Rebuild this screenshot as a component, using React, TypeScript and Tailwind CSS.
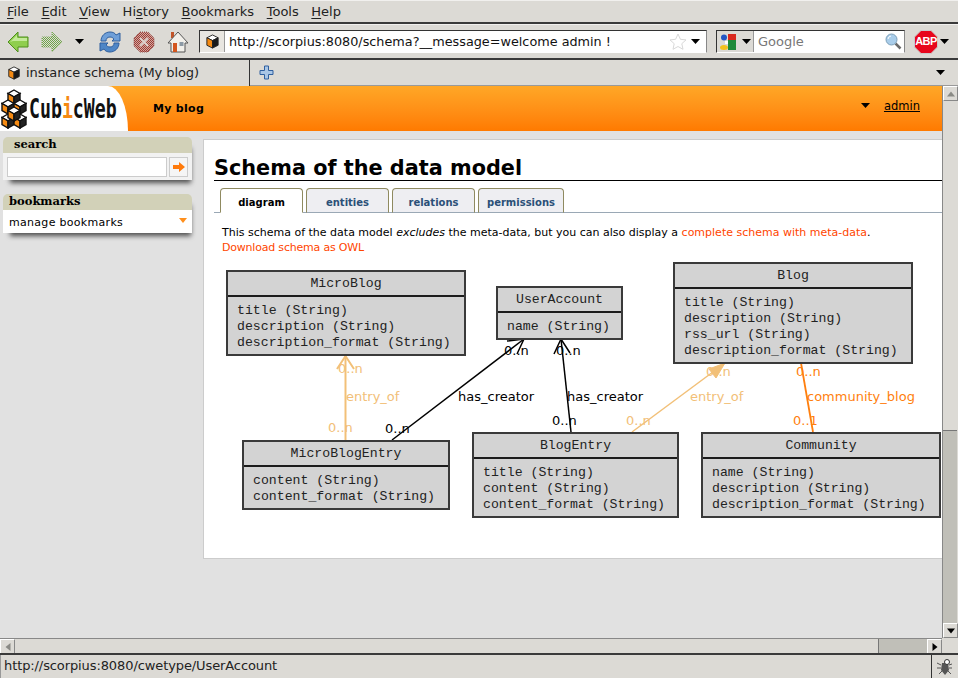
import React from 'react';

const CHROME_MENU = [
  { key: 'F', rest: 'ile' },
  { key: 'E', rest: 'dit' },
  { key: 'V', rest: 'iew' },
  { pre: 'Hi', key: 's', rest: 'tory' },
  { key: 'B', rest: 'ookmarks' },
  { key: 'T', rest: 'ools' },
  { key: 'H', rest: 'elp' },
];

function Caret({ className = '' }: { className?: string }) {
  return (
    <svg width="9" height="5" viewBox="0 0 9 5" className={`shrink-0 ${className}`}>
      <path d="M0 0h9L4.5 5z" fill="#000" />
    </svg>
  );
}

function Cube({ size = 16 }: { size?: number }) {
  return (
    <svg width={size} height={size} viewBox="0 0 16 16" className="shrink-0">
      <path d="M8 1l6 3-6 3-6-3z" fill="#fff" stroke="#222" strokeWidth="1" />
      <path d="M2 4l6 3v8l-6-3z" fill="#f58a12" stroke="#222" strokeWidth="1" />
      <path d="M14 4l-6 3v8l6-3z" fill="#1a1a1a" stroke="#222" strokeWidth="1" />
    </svg>
  );
}

function BackArrow() {
  return (
    <svg width="22" height="22" viewBox="0 0 22 22">
      <path d="M1 11L11 1v5h10v10H11v5z" fill="#8fce4e" stroke="#4f8f1d" strokeWidth="1" />
      <path d="M3 11l7-7v3h10v3H6z" fill="#c4ea9a" />
    </svg>
  );
}

// disabled toolbar buttons are dithered in the reference
function ForwardArrow() {
  return (
    <svg width="22" height="22" viewBox="0 0 22 22">
      <defs>
        <pattern id="dither-green" width="2" height="2" patternUnits="userSpaceOnUse">
          <rect width="2" height="2" fill="#dcdad5" />
          <rect width="1" height="1" fill="#6fa548" />
          <rect x="1" y="1" width="1" height="1" fill="#6fa548" />
        </pattern>
      </defs>
      <path d="M21 11L11 1v5H1v10h10v5z" fill="#8dbb6a" stroke="#6d9a4a" strokeWidth="1" strokeDasharray="1 1" />
      <path d="M21 11L11 1v5H1v10h10v5z" fill="url(#dither-green)" />
    </svg>
  );
}

function Reload() {
  return (
    <svg width="22" height="22" viewBox="0 0 22 22">
      <path d="M2 10c0-5 4-9 9-9 3 0 5 1 6 3l4-2v8h-8l2-2c-1-1-2-2-4-2-3 0-4 2-4 4z" fill="#6f9fd8" stroke="#2f5f9f" />
      <path d="M20 12c0 5-4 9-9 9-3 0-5-1-6-3l-4 2v-8h8l-2 2c1 1 2 2 4 2 3 0 4-2 4-4z" fill="#4f86c6" stroke="#2f5f9f" />
    </svg>
  );
}

function Stop() {
  return (
    <svg width="22" height="22" viewBox="0 0 22 22">
      <defs>
        <pattern id="dither-red" width="2" height="2" patternUnits="userSpaceOnUse">
          <rect width="2" height="2" fill="#cfa9a3" />
          <rect width="1" height="1" fill="#a03c34" />
          <rect x="1" y="1" width="1" height="1" fill="#a03c34" />
        </pattern>
      </defs>
      <path d="M7 1h8l6 6v8l-6 6H7l-6-6V7z" fill="url(#dither-red)" stroke="#90504c" strokeDasharray="1 1" />
      <path d="M7 7l8 8M15 7l-8 8" stroke="#dcd0cc" strokeWidth="2" />
    </svg>
  );
}

function Home() {
  return (
    <svg width="22" height="22" viewBox="0 0 22 22">
      <rect x="4" y="1" width="3" height="6" fill="#c2552a" />
      <path d="M11 1L1 12h3v9h14v-9h3z" fill="#f2f0ea" stroke="#555" />
      <rect x="6" y="12" width="4" height="9" fill="#d4561e" />
      <rect x="12.500" y="11" width="4" height="4" fill="#8c9aa5" />
    </svg>
  );
}

function GoogleMark() {
  return (
    <svg width="16" height="16" viewBox="0 0 16 16" className="shrink-0">
      <rect x="8" y="0" width="8" height="6" fill="#d9281e" />
      <rect x="8" y="6" width="8" height="10" fill="#1f8a3a" />
      <circle cx="4" cy="3.500" r="3" fill="#2356c5" />
      <path d="M5 7h3v3H5z" fill="#fff" />
      <ellipse cx="4" cy="13.500" rx="4" ry="2.500" fill="#f3c21c" />
    </svg>
  );
}

function Magnifier() {
  return (
    <svg width="17" height="17" viewBox="0 0 17 17" className="shrink-0">
      <path d="M10.500 10.500l5 5" stroke="#6b6b6b" strokeWidth="2.500" />
      <circle cx="6.500" cy="6.500" r="5.500" fill="#a9cdea" stroke="#7d9fb8" />
      <path d="M3 6a3.500 3.500 0 013-3" stroke="#fff" fill="none" />
    </svg>
  );
}

function Abp() {
  return (
    <div className="relative w-[24px] h-[24px] shrink-0">
      <svg width="24" height="24" viewBox="0 0 24 24" className="absolute inset-0">
        <path d="M7 .5h10L23.500 7v10L17 23.500H7L.5 17V7z" fill="#e8061c" stroke="#c9c9c9" />
      </svg>
      <span className="absolute inset-0 flex items-center justify-center text-white font-bold text-[11px] tracking-[-0.5px] font-['Liberation_Sans',sans-serif]">
        ABP
      </span>
    </div>
  );
}

function LogoCubes() {
  const cube = (x: number, y: number) => (
    <g key={`${x}-${y}`} transform={`translate(${x} ${y})`}>
      <path d="M6 0l6 3.500-6 3.500L0 3.500z" fill="#fff" stroke="#111" strokeWidth="1.400" />
      <path d="M0 3.500l6 3.500v7l-6-3.500z" fill="#f58a12" stroke="#111" strokeWidth="1.400" />
      <path d="M12 3.500L6 7v7l6-3.500z" fill="#222" stroke="#111" strokeWidth="1.400" />
    </g>
  );
  return (
    <svg width="26" height="40" viewBox="0 0 26 40" className="shrink-0">
      {cube(7, 1)}
      {cube(1, 11)}
      {cube(13, 11)}
      {cube(1, 25)}
      {cube(13, 25)}
      {cube(7, 18)}
    </svg>
  );
}

function Underlined({ pre, k, rest }: { pre?: string; k: string; rest: string }) {
  return (
    <span>
      {pre}
      <span className="underline underline-offset-2">{k}</span>
      {rest}
    </span>
  );
}

function Toolbar() {
  return (
    <div className="h-[36px] flex items-center pl-[7px] border-t border-white/60 border-b-2 border-b-[#3a3a3a] shrink-0">
      <BackArrow />
      <div className="ml-[12px]"><ForwardArrow /></div>
      <Caret className="ml-[12px]" />
      <div className="ml-[15px]"><Reload /></div>
      <div className="ml-[12px]"><Stop /></div>
      <div className="ml-[12px]"><Home /></div>

      <div className="ml-[10px] w-[508px] h-[23px] flex items-center bg-white border border-[#888] border-t-[#333] border-l-[#333] border-b-white">
        <div className="w-[25px] h-full bg-[#e8e6e1] border-r border-[#999] flex items-center justify-center">
          <Cube size={15} />
        </div>
        <span className="ml-[4px] flex-1 text-[12.8px] text-[#111] whitespace-nowrap">
          http://scorpius:8080/schema?__message=welcome admin !
        </span>
        <svg width="18" height="17" viewBox="0 0 18 17" className="shrink-0">
          <path d="M9 1l2.400 5.300 5.600.6-4.200 3.800 1.200 5.600L9 13.500l-5 2.800 1.200-5.600L1 6.900l5.600-.6z" fill="#fff" stroke="#d8d8d8" />
        </svg>
        <Caret className="ml-[4px] mr-[6px]" />
      </div>

      <div className="ml-[9px] w-[189px] h-[23px] flex items-center bg-white border border-[#888] border-t-[#333] border-l-[#333] border-b-white">
        <div className="w-[37px] h-full bg-[#dcdad5] border-r border-[#999] flex items-center pl-[3px] gap-[6px]">
          <GoogleMark />
          <Caret />
        </div>
        <span className="ml-[4px] flex-1 text-[13px] text-[#777]">Google</span>
        <div className="mr-[2px]"><Magnifier /></div>
      </div>

      <div className="ml-[9px]"><Abp /></div>
      <Caret className="ml-[2px]" />
    </div>
  );
}

function TabStrip() {
  return (
    <div className="h-[26px] flex items-stretch shrink-0 relative">
      <div className="w-[250px] flex items-center pl-[7px] gap-[5px] border-r border-[#333] text-[13px] tracking-[-0.1px] text-[#222]">
        <Cube size={14} />
        <span>instance schema (My blog)</span>
      </div>
      <div className="flex-1 flex items-center pl-[9px] pr-[13px] justify-between border-b border-[#999]">
        <svg width="15" height="15" viewBox="0 0 15 15">
          <path d="M5.500 1h4v4.500H14v4H9.500V14h-4V9.500H1v-4h4.500z" fill="#a9c6e6" stroke="#2f5f9f" />
        </svg>
        <Caret />
      </div>
    </div>
  );
}

function SideBox({ title, center, children }: { title: string; center?: boolean; children: React.ReactNode }) {
  return (
    <div className="w-[189px] rounded-t-[5px] shadow-[3px_7px_5px_-4px_rgba(0,0,0,0.65)]">
      <div className={`h-[16px] rounded-t-[5px] bg-[#d2d1b8] font-['DejaVu_Serif',serif] font-bold text-[11.5px] leading-[15px] text-black ${center ? 'pl-[11px]' : 'pl-[6px]'}`}>
        {title}
      </div>
      {children}
    </div>
  );
}

function Sidebar() {
  return (
    <aside className="w-[203px] shrink-0 pl-[3px] pt-[6px] flex flex-col gap-[14px]">
      <SideBox title="search" center>
        <div className="h-[27px] bg-[#f2f2f2] flex items-center pl-[4px] gap-[2px]">
          <div className="w-[160px] h-[20px] bg-white border border-[#ccc]" />
          <div className="w-[19px] h-[20px] bg-[#f5f5f5] border border-[#ccc] flex items-center justify-center">
            <svg width="12" height="10" viewBox="0 0 12 10">
              <path d="M0 3h6V0l6 5-6 5V7H0z" fill="#ff7a0a" />
            </svg>
          </div>
        </div>
      </SideBox>
      <SideBox title="bookmarks">
        <div className="h-[23px] pt-[3px] bg-white flex items-center justify-between pl-[6px] pr-[5px] text-[11px] tracking-[0.3px] text-black">
          <span>manage bookmarks</span>
          <svg width="8" height="5" viewBox="0 0 8 5" className="-mt-[5px]">
            <path d="M0 0h8L4 5z" fill="#ff8f1c" />
          </svg>
        </div>
      </SideBox>
    </aside>
  );
}

const TABS = [
  { label: 'diagram', width: 'w-[83px]' },
  { label: 'entities', width: 'w-[83px]' },
  { label: 'relations', width: 'w-[83px]' },
  { label: 'permissions', width: 'w-[86px]' },
];

function SchemaTabs() {
  return (
    <div className="mt-[7px] ml-[10px] h-[25px] flex items-end border-b border-[#9aa8b5]">
      <div className="flex gap-[3px] pl-[6px] -mb-px">
        {TABS.map((t, i) => (
          <div
            key={t.label}
            className={`${t.width} h-[25px] pt-[3px] rounded-t-[4px] border border-[#8f8a60] flex items-center justify-center text-[10px] font-bold ${
              i === 0
                ? 'bg-white text-black border-b-white'
                : 'bg-[#eeeef2] text-[#2b5078] border-b-[#9aa8b5]'
            }`}
          >
            {t.label}
          </div>
        ))}
      </div>
    </div>
  );
}

function EntityBox({ className, name, attrs }: { className: string; name: string; attrs: string[] }) {
  return (
    <div className={`absolute bg-[#d3d3d3] border-2 border-[#3a3a3a] font-['Liberation_Mono',monospace] text-[13.2px] leading-[16px] text-[#222] ${className}`}>
      <div className="h-[25px] flex items-center justify-center border-b-2 border-[#1c1c1c]">{name}</div>
      <div className="pt-[6px] pl-[9px] whitespace-pre">
        {attrs.map((a) => (
          <div key={a}>{a}</div>
        ))}
      </div>
    </div>
  );
}

function Label({ className, children }: { className: string; children: React.ReactNode }) {
  return <span className={`absolute text-[13px] leading-[15px] whitespace-nowrap ${className}`}>{children}</span>;
}

const PALE = '#f2c078';
const STRONG = '#ff7f0e';

// canvas origin is page (204, 262)
function Diagram() {
  return (
    <div className="relative h-[257px] mt-[7px]">
      <svg width="738" height="257" viewBox="0 0 738 257" className="absolute inset-0">
        <path d="M141.500 178V94" stroke={PALE} strokeWidth="2" />
        <path d="M133 107l8.500-13 8.500 13" stroke={PALE} strokeWidth="2" fill="none" />
        <path d="M188 178L320 77" stroke="#000" strokeWidth="1.500" />
        <path d="M303 79l17-2-7 15" stroke="#000" strokeWidth="1.500" fill="none" />
        <path d="M367 170L357 77" stroke="#000" strokeWidth="1.500" />
        <path d="M350 92l7-15 9 14" stroke="#000" strokeWidth="1.500" fill="none" />
        <path d="M428 170L521 101" stroke={PALE} strokeWidth="1.500" />
        <path d="M505 107l16-6-9 15z" fill={PALE} stroke={PALE} />
        <path d="M609 170L597 101" stroke={STRONG} strokeWidth="1.800" />
      </svg>

      <EntityBox className="left-[22px] top-[8px] w-[240px] h-[86px]" name="MicroBlog" attrs={['title (String)', 'description (String)', 'description_format (String)']} />
      <EntityBox className="left-[292px] top-[24px] w-[127px] h-[54px]" name="UserAccount" attrs={['name (String)']} />
      <EntityBox className="left-[469px] top-0 w-[240px] h-[102px]" name="Blog" attrs={['title (String)', 'description (String)', 'rss_url (String)', 'description_format (String)']} />
      <EntityBox className="left-[38px] top-[178px] w-[208px] h-[70px]" name="MicroBlogEntry" attrs={['content (String)', 'content_format (String)']} />
      <EntityBox className="left-[268px] top-[170px] w-[207px] h-[86px]" name="BlogEntry" attrs={['title (String)', 'content (String)', 'content_format (String)']} />
      <EntityBox className="left-[497px] top-[170px] w-[240px] h-[86px]" name="Community" attrs={['name (String)', 'description (String)', 'description_format (String)']} />

      <Label className="left-[134px] top-[99px] text-[#f2c078]">0..n</Label>
      <Label className="left-[142px] top-[127px] text-[#f2c078]">entry_of</Label>
      <Label className="left-[124px] top-[158px] text-[#f2c078]">0..n</Label>
      <Label className="left-[181px] top-[159px] text-black">0..n</Label>
      <Label className="left-[254px] top-[127px] text-black">has_creator</Label>
      <Label className="left-[300px] top-[81px] text-black">0..n</Label>
      <Label className="left-[352px] top-[81px] text-black">0..n</Label>
      <Label className="left-[363px] top-[127px] text-black">has_creator</Label>
      <Label className="left-[348px] top-[151px] text-black">0..n</Label>
      <Label className="left-[502px] top-[102px] text-[#f2c078]">0..n</Label>
      <Label className="left-[486px] top-[127px] text-[#f2c078]">entry_of</Label>
      <Label className="left-[422px] top-[151px] text-[#f2c078]">0..n</Label>
      <Label className="left-[592px] top-[102px] text-[#ff7f0e]">0..n</Label>
      <Label className="left-[603px] top-[127px] text-[12.8px] text-[#ff7f0e]">community_blog</Label>
      <Label className="left-[589px] top-[151px] text-[#ff7f0e]">0..1</Label>
    </div>
  );
}

function MainPanel() {
  return (
    <main className="w-[739px] h-[420px] mt-[8px] bg-white border-l border-t border-b border-[#ccc] overflow-hidden shrink-0">
      <h1 className="ml-[10px] mt-[15px] h-[25px] text-[20.8px] leading-[26px] font-bold text-black whitespace-nowrap border-b border-black box-content">
        Schema of the data model
      </h1>
      <SchemaTabs />
      <div className="ml-[18px] mt-[12px] text-[11px] leading-[15px] text-black">
        <p>
          This schema of the data model <em>excludes</em> the meta-data, but you can also display a{' '}
          <span className="text-[#ff4500]">complete schema with meta-data</span>.
        </p>
        <p className="text-[#ff4500] tracking-[-0.2px]">Download schema as OWL</p>
      </div>
      <Diagram />
    </main>
  );
}

function ScrollButton({ dir, className = '' }: { dir: 'up' | 'down' | 'left' | 'right'; className?: string }) {
  const paths = { up: 'M0 5h8L4 0z', down: 'M0 0h8L4 5z', left: 'M5 0v8L0 4z', right: 'M0 0v8l5-4z' };
  const fill = dir === 'up' || dir === 'left' ? '#8a8a85' : '#000';
  return (
    <div className={`w-[15px] h-[15px] shrink-0 bg-[#dcdad5] border border-[#888] border-t-white border-l-white flex items-center justify-center ${className}`}>
      <svg width="8" height="8" viewBox="0 0 8 8">
        <path d={paths[dir]} fill={fill} transform={dir === 'up' || dir === 'down' ? 'translate(0 1.500)' : 'translate(1.500 0)'} />
      </svg>
    </div>
  );
}

export default function App() {
  return (
    <div className="w-[958px] h-[678px] overflow-hidden flex flex-col bg-[#dcdad5] font-['DejaVu_Sans',sans-serif]">
      {/* menu bar */}
      <div className="h-[24px] shrink-0 flex items-center pl-[7px] gap-[12.6px] text-[13px] text-[#222] border-t border-white/60 border-b-2 border-b-[#3a3a3a]">
        {CHROME_MENU.map((m) => (
          <Underlined key={m.key + m.rest} pre={m.pre} k={m.key} rest={m.rest} />
        ))}
      </div>
      <Toolbar />
      <TabStrip />

      {/* page header */}
      <div className="flex-1 min-h-0 flex">
        <div className="w-[942px] flex flex-col min-h-0">
          <header className="h-[45px] shrink-0 flex items-stretch bg-gradient-to-b from-[#ffa726] to-[#ff7a00]">
            <div className="w-[128px] bg-white rounded-tr-[20px_45px] flex items-center pl-[1px] gap-[2px] overflow-hidden">
              <LogoCubes />
              <span className="font-['DejaVu_Sans_Mono',monospace] font-bold text-[26px] leading-none scale-x-[0.7] origin-left text-[#111] whitespace-nowrap">
                Cub<span className="text-[#f58a12]">i</span>cWeb
              </span>
            </div>
            <div className="ml-[25px] mt-[16px] text-[11px] leading-[13px] font-bold tracking-[0.3px] text-black">My blog</div>
            <div className="ml-auto mr-[22px] mt-[14px] flex items-start gap-[14px] text-[11.500px] leading-[13px] text-black">
              <svg width="9" height="5" viewBox="0 0 9 5" className="mt-[3px]">
                <path d="M0 0h9L4.500 5z" fill="#000" />
              </svg>
              <span className="underline">admin</span>
            </div>
          </header>
          <div className="flex-1 min-h-0 flex bg-[#e1e1e1]">
            <Sidebar />
            <MainPanel />
          </div>
          {/* horizontal scrollbar */}
          <div className="h-[15px] shrink-0 flex bg-[#c0bfb8] border-t border-[#888]">
            <ScrollButton dir="left" />
            <div className="w-[864px] bg-[#dcdad5] border-r border-[#777]" />
            <div className="flex-1" />
            <ScrollButton dir="right" />
          </div>
        </div>
        {/* vertical scrollbar */}
        <div className="w-[16px] flex flex-col">
          <div className="w-[15px] flex-1 flex flex-col bg-[#c0bfb8] border-l border-[#888]">
            <ScrollButton dir="up" />
            <div className="h-[330px] bg-[#dcdad5] border-b border-[#777]" />
            <div className="flex-1" />
            <ScrollButton dir="down" />
          </div>
          <div className="h-[15px]" />
        </div>
      </div>

      {/* status bar */}
      <div className="h-[25px] shrink-0 flex border-t-2 border-[#3a3a3a] text-[13px] leading-[21px] text-[#222]">
        <div className="flex-1 flex items-start pl-[3px] border-l border-[#999] tracking-[-0.1px]">http://scorpius:8080/cwetype/UserAccount</div>
        <div className="w-[27px] border-l border-[#333] flex items-center justify-center">
          <svg width="16" height="18" viewBox="0 0 16 18">
            <path d="M5 5l6 0 1 7-4 5-4-5z" fill="#555" />
            <circle cx="10" cy="4" r="2.500" fill="#fff" stroke="#333" />
            <path d="M4 7L0 5M4 10H0M5 13l-3 3M12 7l3-1M12 10h3M11 13l3 3" stroke="#555" />
          </svg>
        </div>
      </div>
    </div>
  );
}
